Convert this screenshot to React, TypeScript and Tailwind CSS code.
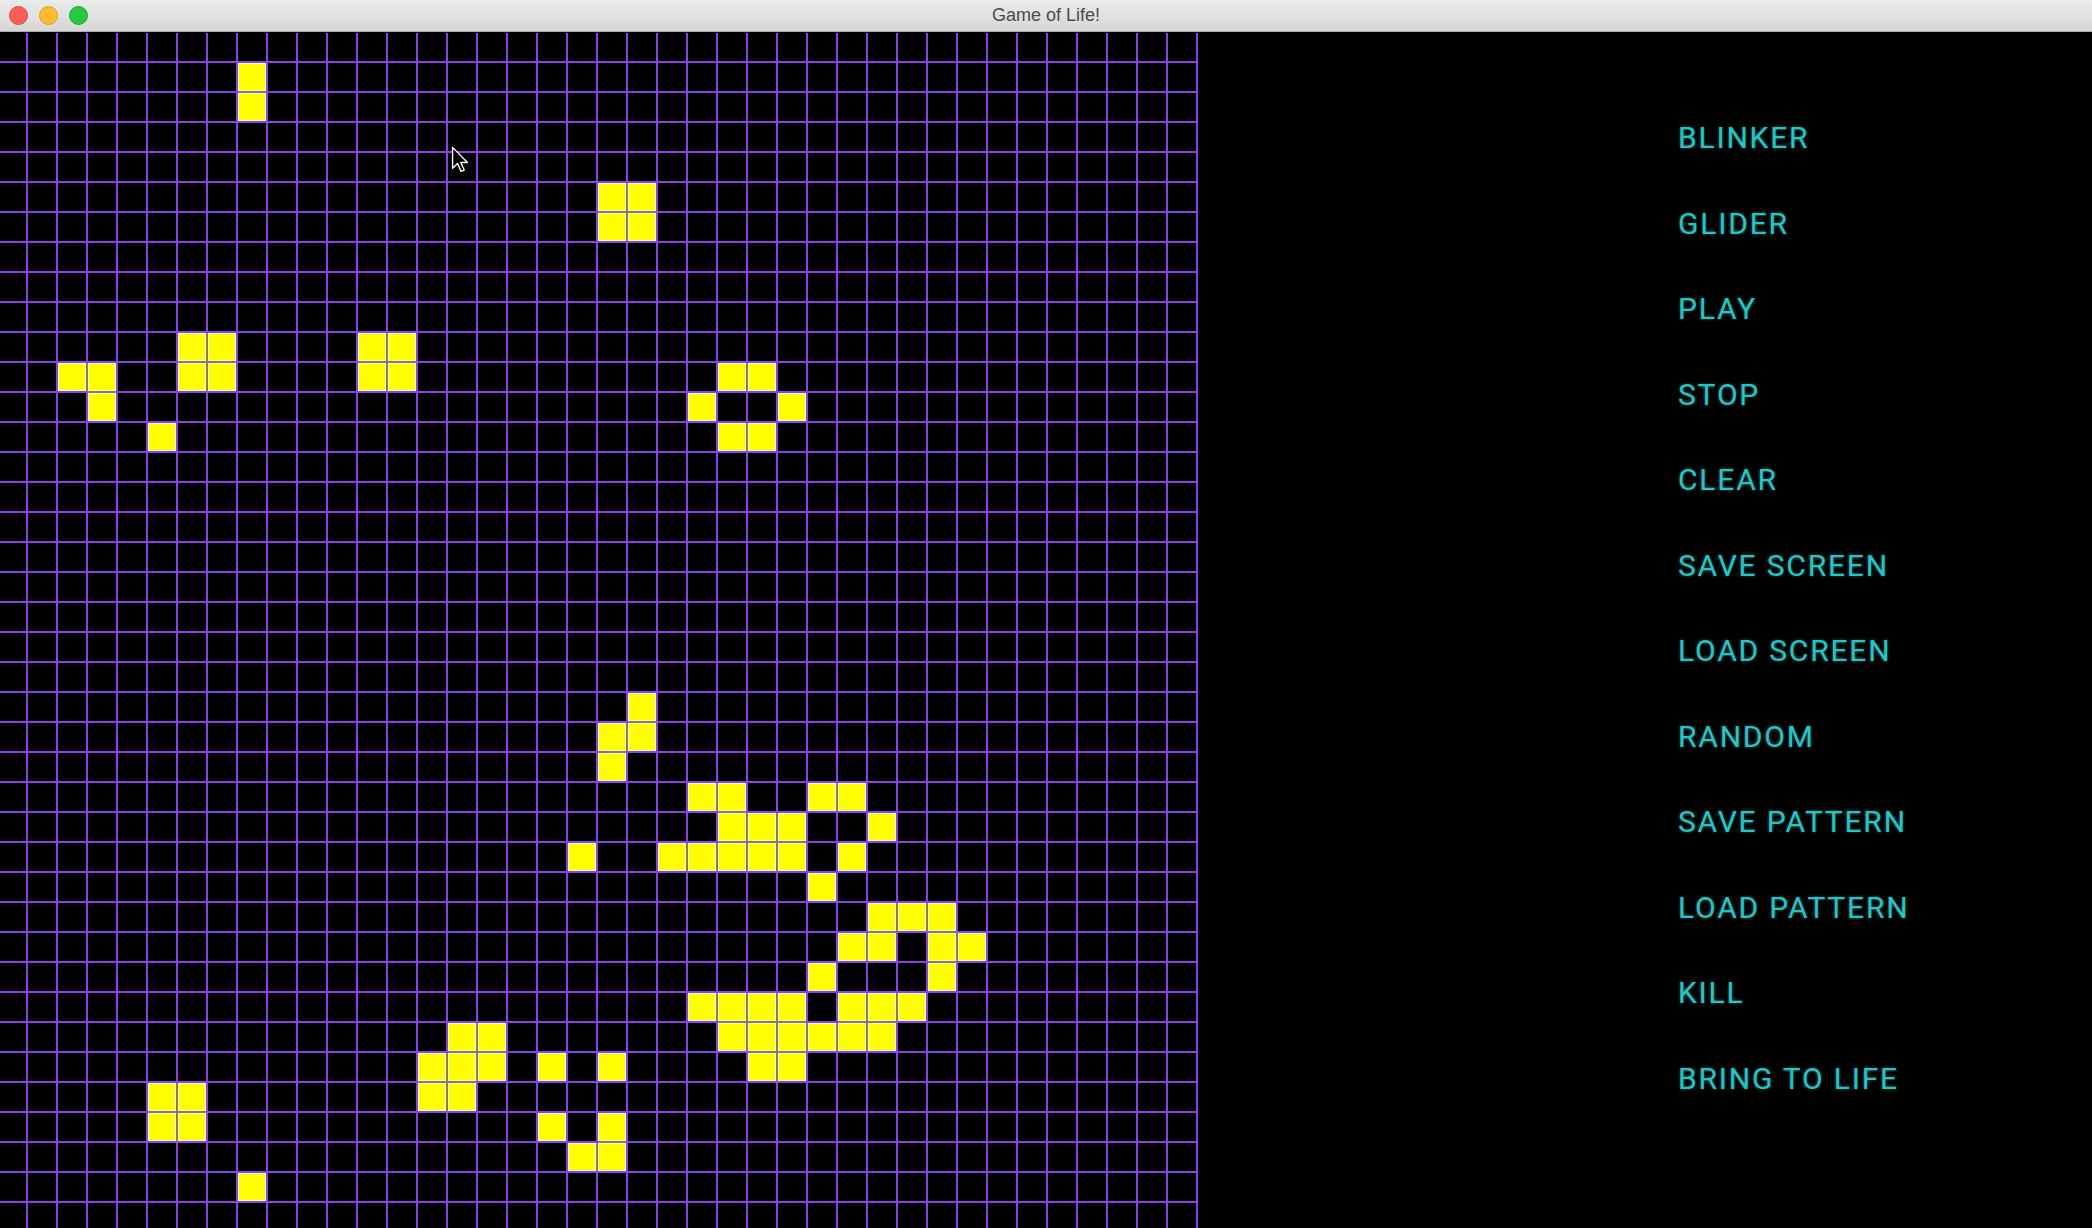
import React from 'react';

const COLS = 40;
const ROWS = 40;

// live cells, row -> columns
const LIVE: Record<number, number[]> = {
  1: [8],
  2: [8],
  5: [20, 21],
  6: [20, 21],
  10: [6, 7, 12, 13],
  11: [2, 3, 6, 7, 12, 13, 24, 25],
  12: [3, 23, 26],
  13: [5, 24, 25],
  22: [21],
  23: [20, 21],
  24: [20],
  25: [23, 24, 27, 28],
  26: [24, 25, 26, 29],
  27: [19, 22, 23, 24, 25, 26, 28],
  28: [27],
  29: [29, 30, 31],
  30: [28, 29, 31, 32],
  31: [27, 31],
  32: [23, 24, 25, 26, 28, 29, 30],
  33: [15, 16, 24, 25, 26, 27, 28, 29],
  34: [14, 15, 16, 18, 20, 25, 26],
  35: [5, 6, 14, 15],
  36: [5, 6, 18, 20],
  37: [19, 20],
  38: [8],
};

const isLive = (c: number, r: number) => (LIVE[r] || []).includes(c);

const MENU = [
  'BLINKER',
  'GLIDER',
  'PLAY',
  'STOP',
  'CLEAR',
  'SAVE SCREEN',
  'LOAD SCREEN',
  'RANDOM',
  'SAVE PATTERN',
  'LOAD PATTERN',
  'KILL',
  'BRING TO LIFE',
];

function TitleBar() {
  return (
    <div className="relative h-[32px] flex items-center justify-center bg-gradient-to-b from-[#ececec] to-[#d6d6d6] border-b border-[#b1b1b1]">
      <div className="absolute left-[9px] top-[6px] flex gap-[11px]">
        <span className="w-[19px] h-[19px] rounded-full bg-[#fc5f57] border border-[#e0443e]" />
        <span className="w-[19px] h-[19px] rounded-full bg-[#fdbc2e] border border-[#dea123]" />
        <span className="w-[19px] h-[19px] rounded-full bg-[#28c840] border border-[#1aab29]" />
      </div>
      <span className="text-[18px] text-[#4b4b4b] font-['Liberation_Sans',Arial,sans-serif]">Game of Life!</span>
    </div>
  );
}

function Board() {
  const cells = [];
  for (let r = 0; r < ROWS; r++) {
    for (let c = 0; c < COLS; c++) {
      const live = isLive(c, r);
      const right = live && isLive(c + 1, r) ? 'border-r-[#8f7a52]' : 'border-r-[#8a43e4]';
      const bottom = live && isLive(c, r + 1) ? 'border-b-[#8f7a52]' : 'border-b-[#8a43e4]';
      cells.push(
        <div
          key={`${c}-${r}`}
          className={`h-[30px] border-r-2 border-b-2 ${right} ${bottom} ${
            live ? 'bg-[#ffff00] shadow-[inset_0_0_0_1px_#fff8d8]' : 'bg-black'
          }`}
        />
      );
    }
  }
  return <div className="-ml-[2px] mt-[1px] shrink-0 grid grid-cols-[repeat(40,30px)]">{cells}</div>;
}

function Menu() {
  return (
    <div className="flex-1 pl-[480px] pt-[63px] flex flex-col">
      {MENU.map((item) => (
        <div
          key={item}
          className="h-[85.5px] flex items-center text-[30px] tracking-[0.06em] text-[#27c4c6] font-['Roboto','Liberation_Sans',sans-serif] [text-shadow:0_0_3px_rgba(39,196,198,0.5)]"
        >
          {item}
        </div>
      ))}
    </div>
  );
}

export default function App() {
  return (
    <div className="relative w-[2092px] h-[1228px] overflow-hidden bg-black">
      <TitleBar />
      <div className="flex">
        <Board />
        <Menu />
      </div>
      {/* mouse pointer */}
      <svg className="absolute left-[451px] top-[146px]" width="18" height="27" viewBox="0 0 13 20">
        <path d="M1 1 L1 16.5 L4.7 13 L7.3 18.8 L9.6 17.8 L7.1 12.2 L12 12.2 Z" fill="#000" stroke="#fff" strokeWidth="1" strokeLinejoin="round" />
      </svg>
    </div>
  );
}
